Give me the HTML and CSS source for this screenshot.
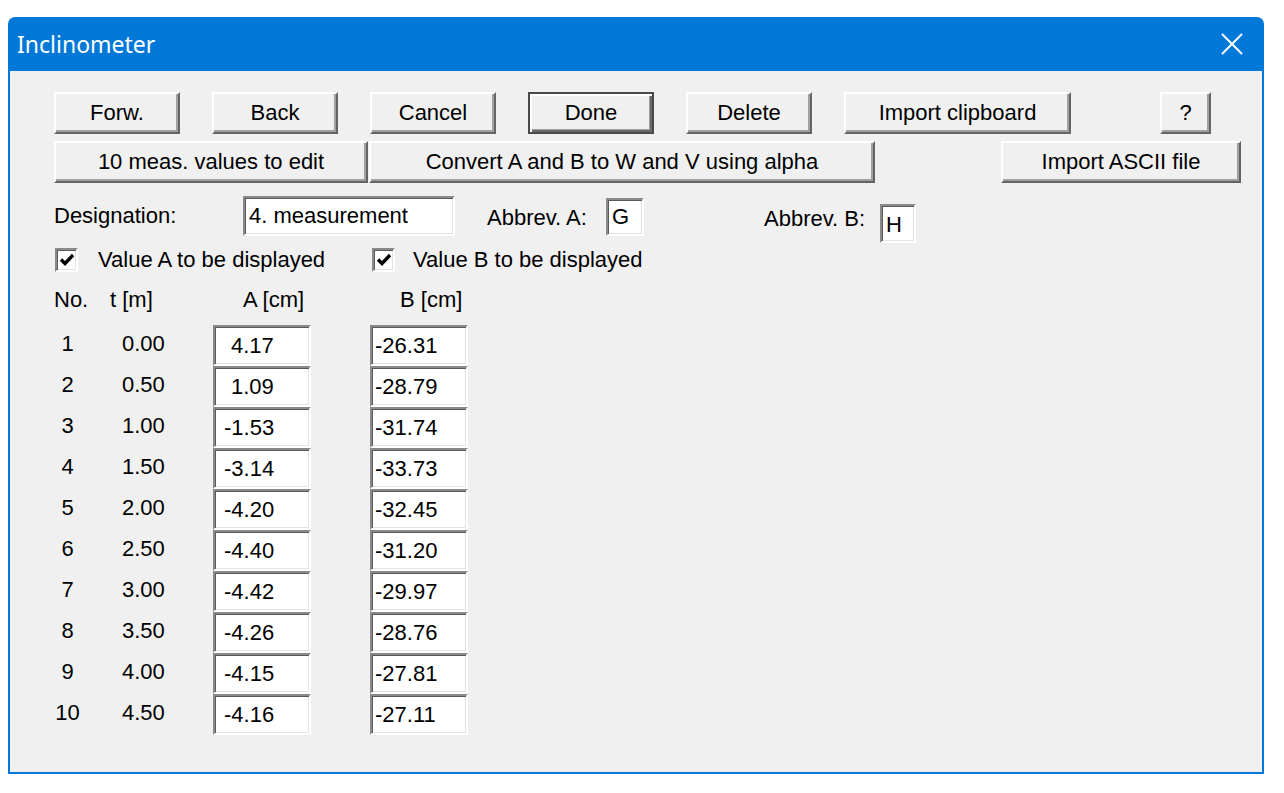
FILE: index.html
```html
<!DOCTYPE html>
<html>
<head>
<meta charset="utf-8">
<title>Inclinometer</title>
<link rel="stylesheet" href="styles.css">
</head>
<body>
<div class="window">
  <div class="titlebar">
    <span class="title">Inclinometer</span>
    <svg class="close" width="22" height="22" viewBox="0 0 22 22"><path d="M1 1 L21 21 M21 1 L1 21" stroke="#fff" stroke-width="2" fill="none"/></svg>
  </div>
  <div class="client">
    <div class="btnrow row1">
      <div class="btn b-std">Forw.</div>
      <div class="btn b-std">Back</div>
      <div class="btn b-std">Cancel</div>
      <div class="btn b-std default">Done</div>
      <div class="btn b-std">Delete</div>
      <div class="btn b-clip">Import clipboard</div>
      <div class="btn b-help">?</div>
    </div>
    <div class="btnrow row2">
      <div class="btn b-meas">10 meas. values to edit</div>
      <div class="btn b-conv">Convert A and B to W and V using alpha</div>
      <div class="btn b-ascii">Import ASCII file</div>
    </div>
    <div class="desig">
      <div class="lbl lbl-desig">Designation:</div>
      <div class="field f-desig">4. measurement</div>
      <div class="lbl lbl-aba">Abbrev. A:</div>
      <div class="field f-g">G</div>
      <div class="lbl lbl-abb">Abbrev. B:</div>
      <div class="field f-h">H</div>
    </div>
    <div class="checks">
      <div class="cb cb-a"><svg width="18" height="18" viewBox="0 0 18 18"><path d="M3 8.5 L7 12.5 L15 4" stroke="#000" stroke-width="3.4" fill="none"/></svg></div>
      <div class="cb-label lbl-a">Value A to be displayed</div>
      <div class="cb"><svg width="18" height="18" viewBox="0 0 18 18"><path d="M3 8.5 L7 12.5 L15 4" stroke="#000" stroke-width="3.4" fill="none"/></svg></div>
      <div class="cb-label lbl-b">Value B to be displayed</div>
    </div>
    <div class="header">
      <div class="h-no">No.</div>
      <div class="h-t">t [m]</div>
      <div class="h-a">A [cm]</div>
      <div class="h-b">B [cm]</div>
    </div>
    <div class="grid">
      <div class="no">1</div><div class="t">0.00</div><div class="field fa pos">4.17</div><div></div><div class="field fb">-26.31</div>
      <div class="no">2</div><div class="t">0.50</div><div class="field fa pos">1.09</div><div></div><div class="field fb">-28.79</div>
      <div class="no">3</div><div class="t">1.00</div><div class="field fa">-1.53</div><div></div><div class="field fb">-31.74</div>
      <div class="no">4</div><div class="t">1.50</div><div class="field fa">-3.14</div><div></div><div class="field fb">-33.73</div>
      <div class="no">5</div><div class="t">2.00</div><div class="field fa">-4.20</div><div></div><div class="field fb">-32.45</div>
      <div class="no">6</div><div class="t">2.50</div><div class="field fa">-4.40</div><div></div><div class="field fb">-31.20</div>
      <div class="no">7</div><div class="t">3.00</div><div class="field fa">-4.42</div><div></div><div class="field fb">-29.97</div>
      <div class="no">8</div><div class="t">3.50</div><div class="field fa">-4.26</div><div></div><div class="field fb">-28.76</div>
      <div class="no">9</div><div class="t">4.00</div><div class="field fa">-4.15</div><div></div><div class="field fb">-27.81</div>
      <div class="no">10</div><div class="t">4.50</div><div class="field fa">-4.16</div><div></div><div class="field fb">-27.11</div>
    </div>
  </div>
</div>
</body>
</html>
```

FILE: styles.css
```css
html, body {
  margin: 0;
  padding: 0;
  background: #ffffff;
}

body {
  font-family: "Liberation Sans", Arial, sans-serif;
  font-size: 22px;
  color: #000;
}

.window {
  width: 1256px;
  height: 757px;
  margin: 17px 0 0 8px;
  background: #0078d7;
  border-radius: 7px 7px 0 0;
  display: flex;
  flex-direction: column;
}

.titlebar {
  height: 54px;
  flex: none;
  display: flex;
  align-items: center;
  padding: 0 21px 0 9px;
  color: #fff;
  font-family: "Noto Sans", "Open Sans", sans-serif;
  font-size: 23px;
}

.close {
  margin-left: auto;
  display: block;
}

.client {
  flex: 1;
  margin: 0 2px 2px 2px;
  background: #f0f0f0;
  padding: 21px 0 0 44px;
  display: flex;
  flex-direction: column;
}

/* buttons */
.btnrow {
  display: flex;
  height: 42px;
}

.row1 { gap: 32px; }
.row2 { gap: 1px; margin-top: 7px; }

.btn {
  box-sizing: border-box;
  height: 42px;
  display: flex;
  align-items: center;
  justify-content: center;
  background: #f0f0f0;
  border: 2px solid;
  border-color: #ffffff #646464 #646464 #ffffff;
  box-shadow: inset -2px -2px 0 #a0a0a0;
  white-space: nowrap;
}

.btn.default {
  border: 2px solid #4a4a4a;
  box-shadow: inset 2px 2px 0 #ffffff, inset -2px -2px 0 #696969, inset -3px -3px 0 #a0a0a0;
}

.b-std { width: 126px; }
.b-clip { width: 227px; }
.b-help { width: 51px; margin-left: 57px; }
.b-meas { width: 314px; }
.b-conv { width: 506px; }
.b-ascii { width: 240px; margin-left: 125px; }

/* text fields */
.field {
  box-sizing: border-box;
  background: #fff;
  border-style: solid;
  border-width: 2px 2px 2px 2px;
  border-color: #8a8a8a #ffffff #ffffff #8a8a8a;
  box-shadow: inset 1px 1px 0 #5a5a5a, inset -1px -1px 0 #e3e3e3;
  white-space: nowrap;
  overflow: hidden;
}

.desig {
  display: flex;
  align-items: flex-start;
  margin-top: 13px;
}

.lbl {
  height: 40px;
  line-height: 40px;
  white-space: nowrap;
}

.lbl-desig { width: 189px; }

.f-desig {
  width: 212px;
  height: 40px;
  line-height: 36px;
  padding-left: 4px;
}

.lbl-aba {
  width: 119px;
  margin-left: 32px;
  margin-top: 2px;
}

.f-g {
  width: 38px;
  height: 38px;
  margin-top: 2px;
  line-height: 34px;
  padding-left: 4px;
}

.lbl-abb {
  width: 116px;
  margin-left: 120px;
  margin-top: 3px;
}

.f-h {
  width: 36px;
  height: 39px;
  margin-top: 8px;
  line-height: 37px;
  padding-left: 4px;
}

/* checkboxes */
.checks {
  display: flex;
  align-items: center;
  height: 24px;
  margin-top: 5px;
}

.cb {
  box-sizing: border-box;
  width: 23px;
  height: 24px;
  background: #fff;
  border-style: solid;
  border-width: 2px;
  border-color: #8a8a8a #ffffff #ffffff #8a8a8a;
  box-shadow: inset 1px 1px 0 #5a5a5a, inset -1px -1px 0 #e3e3e3;
  display: flex;
  align-items: center;
  justify-content: center;
}

.cb-a { margin-left: 1px; }

.cb-label {
  white-space: nowrap;
  line-height: 24px;
}

.lbl-a { width: 274px; margin-left: 20px; }
.lbl-b { margin-left: 18px; }

/* header */
.header {
  display: flex;
  height: 24px;
  line-height: 24px;
  margin-top: 16px;
  white-space: nowrap;
}

.h-no { width: 56px; }
.h-t { width: 133px; }
.h-a { width: 157px; }

/* data grid */
.grid {
  display: grid;
  grid-template-columns: 27px 132px 98px 59px 98px;
  grid-auto-rows: 41px;
  margin-top: 13px;
}

.no {
  text-align: center;
  line-height: 38px;
  white-space: nowrap;
}

.t {
  padding-left: 41px;
  line-height: 38px;
}

.grid .field {
  height: 41px;
  line-height: 37px;
}

.fa { padding-left: 9px; }
.fa.pos { padding-left: 16px; }
.fb { padding-left: 3px; }
```
